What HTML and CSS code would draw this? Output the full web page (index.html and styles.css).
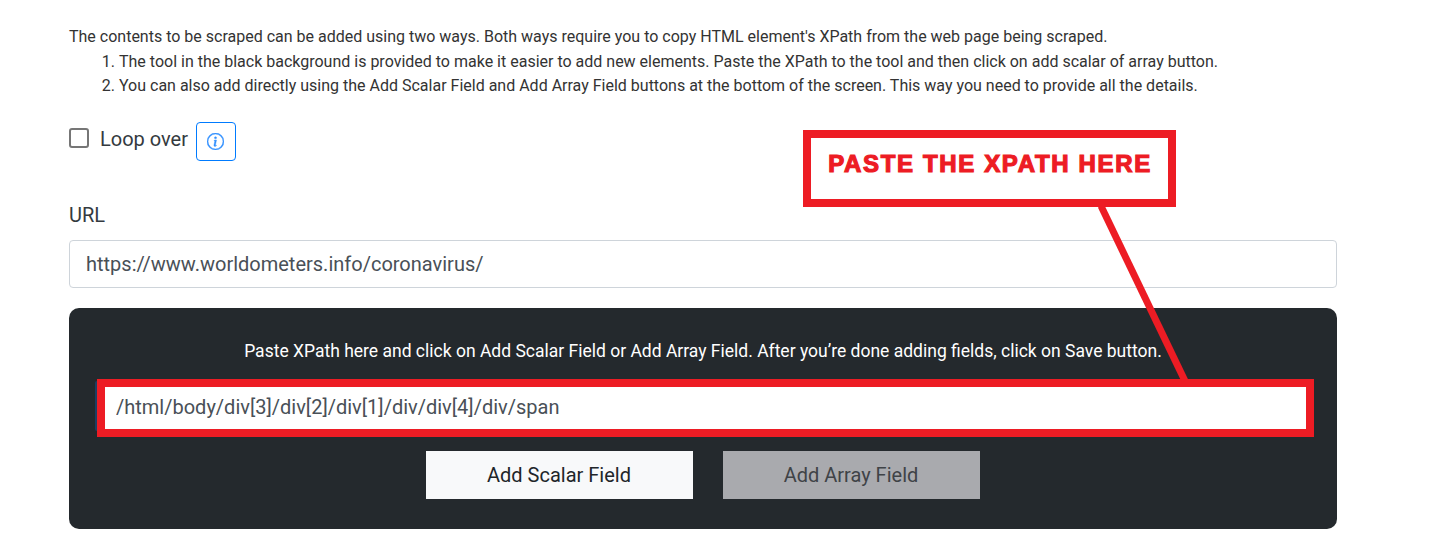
FILE: index.html
```html
<!DOCTYPE html>
<html lang="en">
<head>
    <meta charset="UTF-8">
    <title>Scraper fields</title>
    <link rel="stylesheet" href="styles.css">
</head>
<body>
    <div class="page">
        <div class="intro">
            <p>The contents to be scraped can be added using two ways. Both ways require you to copy HTML element's XPath from the web page being scraped.</p>
            <ol>
                <li>The tool in the black background is provided to make it easier to add new elements. Paste the XPath to the tool and then click on add scalar of array button.</li>
                <li>You can also add directly using the Add Scalar Field and Add Array Field buttons at the bottom of the screen. This way you need to provide all the details.</li>
            </ol>
        </div>

        <div class="loop">
            <span class="checkbox"></span>
            <span class="loop-label">Loop over</span>
            <button class="info">
                <svg width="17" height="17" viewBox="0 0 16 16" fill="currentColor" stroke="currentColor" stroke-width="0.4">
                    <path d="M8 15A7 7 0 1 1 8 1a7 7 0 0 1 0 14zm0 1A8 8 0 1 0 8 0a8 8 0 0 0 0 16z"/>
                    <path d="M8.93 6.59l-2.29.28-.08.38.45.08c.29.07.35.18.29.47l-.74 3.47c-.19.9.11 1.32.82 1.32.55 0 1.19-.25 1.48-.6l.09-.42c-.2.18-.5.25-.69.25-.28 0-.38-.19-.31-.54l.98-4.69zM9 4.5a1 1 0 1 1-2 0 1 1 0 0 1 2 0z"/>
                </svg>
            </button>
        </div>

        <label class="url-label">URL</label>
        <input class="field url" value="https://www.worldometers.info/coronavirus/">

        <div class="tool">
            <p class="tool-hint">Paste XPath here and click on Add Scalar Field or Add Array Field. After you’re done adding fields, click on Save button.</p>
            <div class="xpath-frame">
                <input class="field xpath" value="/html/body/div[3]/div[2]/div[1]/div/div[4]/div/span">
            </div>
            <div class="tool-buttons">
                <button class="btn btn-light">Add Scalar Field</button>
                <button class="btn btn-grey">Add Array Field</button>
            </div>
        </div>
    </div>

    <!-- annotation drawn over the screenshot -->
    <div class="callout">PASTE THE XPATH HERE</div>
    <svg class="pointer" width="100" height="180" viewBox="0 0 100 180">
        <line x1="3" y1="0" x2="87" y2="175" stroke="#ed1c24" stroke-width="7"/>
    </svg>
</body>
</html>
```

FILE: styles.css
```css
*{
    box-sizing: border-box;
}

body{
    margin: 0;
    background-color: #fff;
    color: #212529;
    font-family: Roboto, "Liberation Sans", sans-serif;
}

.page{
    width: 1268px;
    margin-left: 69px;
    padding-top: 25px;
}

/* instructions */
.intro{
    font-size: 16px;
    line-height: 24.5px;
    color: #333;
}

.intro p,
.intro ol{
    margin: 0;
}

.intro ol{
    padding-left: 50px;
}

/* loop over row */
.loop{
    display: flex;
    align-items: flex-start;
    margin-top: 23px;
}

.checkbox{
    width: 20px;
    height: 20px;
    margin: 6px 11px 0 0;
    border: 2px solid #767676;
    border-radius: 3px;
}

.loop-label{
    padding-top: 1px;
    font-size: 20px;
    line-height: 32px;
    color: #343a40;
}

.info{
    display: flex;
    align-items: center;
    justify-content: center;
    width: 40px;
    height: 39px;
    margin: 0 0 0 8px;
    padding: 0;
    border: 1px solid #007bff;
    border-radius: 4px;
    background: #fff;
    color: #2f8fff;
}

.url-label{
    display: block;
    margin-top: 41px;
    font-size: 20px;
    line-height: 27px;
    color: #343a40;
}

/* inputs */
.field{
    display: block;
    width: 100%;
    height: 48px;
    padding: 0 16px;
    border: 1px solid #ced4da;
    border-radius: 4px;
    background: #fff;
    color: #495057;
    font-family: inherit;
    font-size: 20px;
}

.url{
    margin-top: 11px;
}

/* black tool */
.tool{
    height: 221px;
    margin-top: 20px;
    padding: 31px 23px 0 28px;
    border-radius: 10px;
    background-color: #24292d;
}

.tool-hint{
    margin: 0;
    padding-right: 5px;
    color: #fff;
    font-size: 17.5px;
    line-height: 24px;
    text-align: center;
}

.xpath-frame{
    position: relative;
    height: 58px;
    margin-top: 16px;
    border: 8px solid #ed1c24;
}

/* what is left of the input's focus ring, just outside the red frame */
.xpath-frame::before{
    content: "";
    position: absolute;
    left: -10px;
    top: -6px;
    width: 2px;
    height: 50px;
    border-radius: 2px 0 0 2px;
    background-color: #1d3f63;
}

.xpath{
    height: 42px;
    padding: 0 11px 2px;
    border: 0;
    border-radius: 0;
}

.tool-buttons{
    display: flex;
    justify-content: center;
    gap: 30px;
    margin-top: 14px;
    padding-right: 6px;
}

.btn{
    height: 48px;
    border: 0;
    font-family: inherit;
    font-size: 20px;
    color: #212529;
}

.btn-light{
    width: 267px;
    background-color: #f8f9fa;
}

.btn-grey{
    width: 257px;
    background-color: #a9aaae;
    color: #3f4347;
}

/* annotation */
.callout{
    position: absolute;
    left: 803px;
    top: 130px;
    width: 373px;
    height: 77px;
    padding: 16px 0 0 1px;
    border: 8px solid #ed1c24;
    background: #fff;
    color: #ed1c24;
    font-family: "Liberation Sans", Arial, sans-serif;
    font-size: 24px;
    font-weight: 700;
    line-height: 20px;
    letter-spacing: 1.65px;
    text-align: center;
    -webkit-text-stroke: 1.2px #ed1c24;
}

.pointer{
    position: absolute;
    left: 1098px;
    top: 206px;
}
```
